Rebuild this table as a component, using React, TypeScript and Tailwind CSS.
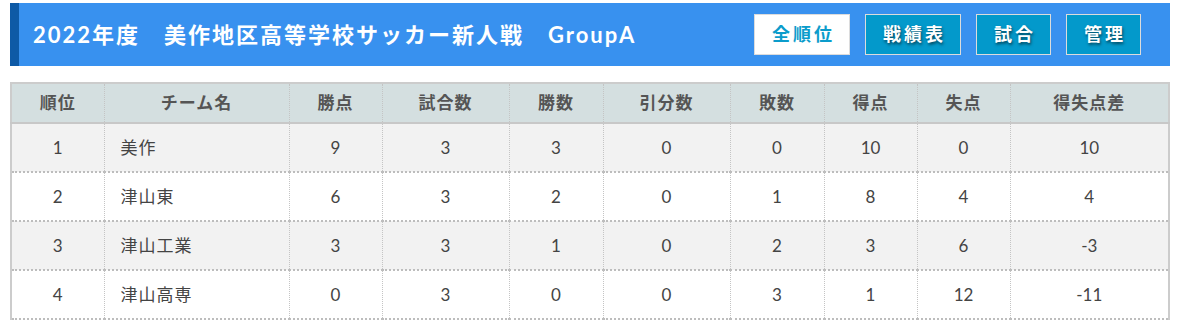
const BUTTONS = [
  { label: '全順位', active: true },
  { label: '戦績表', active: false },
  { label: '試合', active: false },
  { label: '管理', active: false },
]

// 列幅はスクショから実測（合計 1156px）
const COLS = [
  { label: '順位', w: 'w-[93px]' },
  { label: 'チーム名', w: 'w-[185px]' },
  { label: '勝点', w: 'w-[93px]' },
  { label: '試合数', w: 'w-[127px]' },
  { label: '勝数', w: 'w-[94px]' },
  { label: '引分数', w: 'w-[127px]' },
  { label: '敗数', w: 'w-[94px]' },
  { label: '得点', w: 'w-[93px]' },
  { label: '失点', w: 'w-[93px]' },
  { label: '得失点差', w: '' },
]

const ROWS = [
  { rank: 1, name: '美作', pts: 9, games: 3, win: 3, draw: 0, lose: 0, gf: 10, ga: 0, diff: '10' },
  { rank: 2, name: '津山東', pts: 6, games: 3, win: 2, draw: 0, lose: 1, gf: 8, ga: 4, diff: '4' },
  { rank: 3, name: '津山工業', pts: 3, games: 3, win: 1, draw: 0, lose: 2, gf: 3, ga: 6, diff: '-3' },
  { rank: 4, name: '津山高専', pts: 0, games: 3, win: 0, draw: 0, lose: 3, gf: 1, ga: 12, diff: '-11' },
]

export default function App() {
  return (
    <div className="min-h-[328px] bg-white px-[10px] pt-[3px] font-['Lato','Noto_Sans_CJK_JP',sans-serif]">
      {/* ヘッダー */}
      <div className="flex h-[63px] items-center justify-between border-l-[9px] border-[#0e5aa6] bg-[#3891ef] pl-[14px] pr-[29px]">
        <h1 className="text-[22px] font-bold tracking-[2px] text-white">2022年度　美作地区高等学校サッカー新人戦　GroupA</h1>
        <div className="flex gap-[15px]">
          {BUTTONS.map((b) => (
            <button
              key={b.label}
              className={
                'h-[41px] border border-[#dcdcdc] pl-[17px] pr-[14px] text-[18px] font-bold tracking-[3px] ' +
                (b.active ? 'bg-white text-[#0b9ccb]' : 'bg-[#0399cb] text-white [text-shadow:1px_2px_3px_rgba(0,0,0,0.55)]')
              }
            >
              {b.label}
            </button>
          ))}
        </div>
      </div>

      {/* 順位表 */}
      <table className="mt-[16px] w-full table-fixed border-collapse border-2 border-b-0 border-[#cccccc] text-[17px] text-[#444]">
        <thead>
          <tr className="h-[40px] border-b-2 border-[#c8c8c8] bg-[#d4dfe0]">
            {COLS.map((c, i) => (
              <th
                key={c.label}
                className={'border-x border-dotted border-[#c4c4c4] font-bold tracking-[1px] text-[#555] ' + c.w + (i === 0 ? ' border-l-0' : '')}
              >
                {c.label}
              </th>
            ))}
          </tr>
        </thead>
        <tbody>
          {ROWS.map((r, idx) => {
            const cells = [r.rank, r.name, r.pts, r.games, r.win, r.draw, r.lose, r.gf, r.ga, r.diff]
            return (
              <tr key={r.rank} className={'h-[49px] border-b-2 border-dotted border-[#bdbdbd] ' + (idx % 2 === 0 ? 'bg-[#f2f2f2]' : 'bg-white')}>
                {cells.map((v, i) => (
                  <td
                    key={i}
                    className={'border-x border-dotted border-[#c4c4c4] ' + (i === 1 ? 'pl-[16px] text-left tracking-[1px]' : 'text-center') + (i === 0 ? ' border-l-0' : '') + (i === 9 ? ' border-r-0' : '')}
                  >
                    {v}
                  </td>
                ))}
              </tr>
            )
          })}
        </tbody>
      </table>
    </div>
  )
}
